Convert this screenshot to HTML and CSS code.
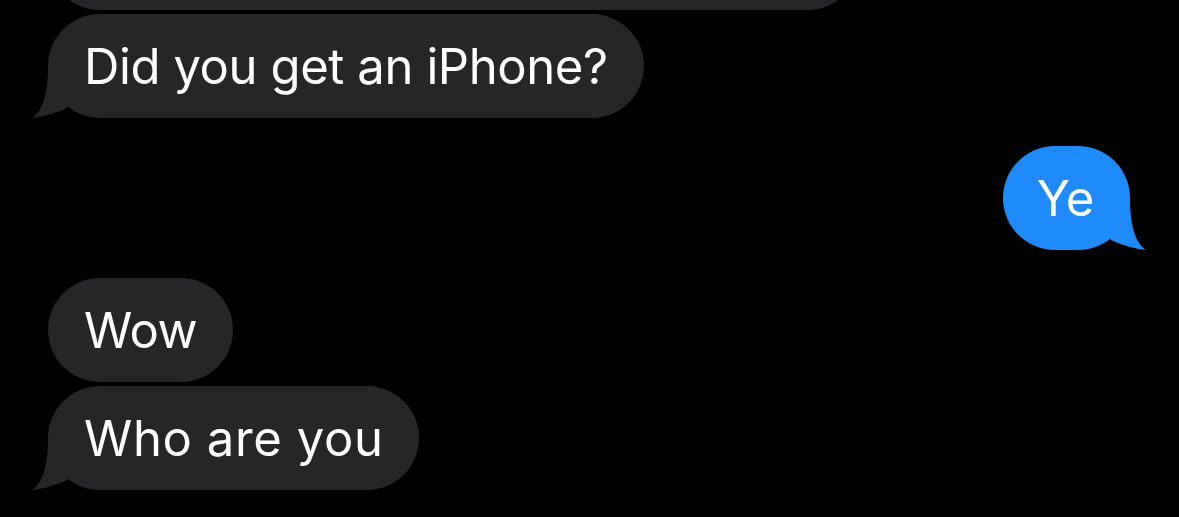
FILE: index.html
```html
<!DOCTYPE html>
<html lang="en">
<head>
  <meta charset="UTF-8" />
  <title>Messages</title>
  <link rel="stylesheet" href="styles.css">
</head>
<body>

<div class="chat">
  <div class="bubble them earlier" aria-hidden="true"></div>

  <div class="bubble them last">
    Did you get an iPhone?
    <svg class="tail" viewBox="0 0 44 52"><path d="M16 0 C16 24 12 44 0 52 Q18 50 35 42 L40 20 Z"/></svg>
  </div>

  <div class="bubble me last">
    Ye
    <svg class="tail" viewBox="0 0 44 52"><path d="M16 0 C16 24 12 44 0 52 Q18 50 35 42 L40 20 Z"/></svg>
  </div>

  <div class="bubble them">Wow</div>

  <div class="bubble them last wide">
    Who are you
    <svg class="tail" viewBox="0 0 44 52"><path d="M16 0 C16 24 12 44 0 52 Q18 50 35 42 L40 20 Z"/></svg>
  </div>
</div>

</body>
</html>
```

FILE: styles.css
```css
body {
  margin: 0;
  background: #000;
  font-family: Inter, "Liberation Sans", Arial, sans-serif;
}

.chat {
  height: 517px;
  box-sizing: border-box;
  display: flex;
  flex-direction: column;
  justify-content: flex-end;
  overflow: hidden;
  padding: 0 49px 27px 48px;
}

.bubble {
  position: relative;
  flex-shrink: 0;
  box-sizing: border-box;
  height: 104px;
  padding: 0 36px 0 36px;
  border-radius: 52px;
  display: flex;
  align-items: center;
  color: #fff;
  font-size: 49px;
  letter-spacing: -0.4px;
  white-space: nowrap;
}

.bubble + .bubble {
  margin-top: 4px;
}

/* new sender = bigger gap */
.them + .me,
.me + .them {
  margin-top: 28px;
}

.them {
  align-self: flex-start;
  background: #262628;
}

.wide {
  letter-spacing: 0.6px;
}

.me {
  align-self: flex-end;
  background: #1f8bfb;
  padding: 0 36px 0 34px;
}

.earlier {
  width: 812px;
}

/* tail of the last message in a group */
.tail {
  position: absolute;
  bottom: 0;
  width: 44px;
  height: 52px;
}

.them .tail {
  left: -16px;
  fill: #262628;
}

.me .tail {
  right: -16px;
  fill: #1f8bfb;
  transform: scaleX(-1);
}
```
